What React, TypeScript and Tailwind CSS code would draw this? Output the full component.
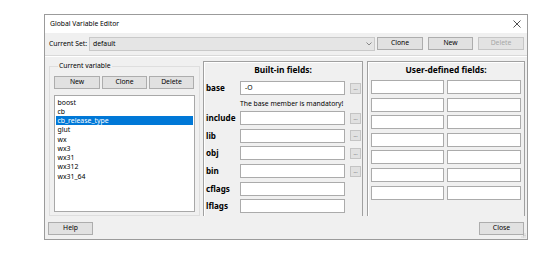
import React from 'react';

const vars = ['boost', 'cb', 'cb_release_type', 'glut', 'wx', 'wx3', 'wx31', 'wx312', 'wx31_64'];
const builtIn = [
  { name: 'include', browse: true },
  { name: 'lib', browse: true },
  { name: 'obj', browse: true },
  { name: 'bin', browse: true },
  { name: 'cflags', browse: false },
  { name: 'lflags', browse: false },
];

function Btn({ label, className = '', disabled = false }: { label: string; className?: string; disabled?: boolean }) {
  return (
    <button
      className={`h-[13px] flex items-center justify-center border text-[6.8px] leading-none ${
        disabled ? 'bg-[#e3e3e3] border-[#c6c6c6] text-[#a6a6a6]' : 'bg-[#e1e1e1] border-[#adadad] text-black'
      } ${className}`}
    >
      {label}
    </button>
  );
}

function Input({ value = '', className = '' }: { value?: string; className?: string }) {
  return (
    <div className={`h-[14px] bg-white border border-[#ababab] flex items-center pl-[4px] text-[6.8px] text-black ${className}`}>
      {value}
    </div>
  );
}

function Browse() {
  return (
    <div className="w-[11px] h-[11px] bg-[#e1e1e1] border border-[#c4c4c4] flex items-center justify-center text-[5px] leading-none text-[#555]">
      ...
    </div>
  );
}

export default function App() {
  return (
    <div className="min-h-screen bg-white pl-[44px] pt-[14px] font-['Noto_Sans',sans-serif] text-black">
      <div className="w-[484px] h-[226px] border border-[#9b9b9b] bg-[#f0f0f0] flex flex-col">
        {/* Title bar */}
        <div className="h-[18px] bg-white flex items-center justify-between pl-[5px] pr-[6px]">
          <span className="text-[6.8px] text-black">Global Variable Editor</span>
          <svg width="8" height="8" viewBox="0 0 8 8">
            <path d="M0.5 0.5 L7.5 7.5 M7.5 0.5 L0.5 7.5" stroke="#222" strokeWidth="0.8" />
          </svg>
        </div>

        {/* Current set row */}
        <div className="h-[23px] flex items-start pt-[4px] pl-[4px] border-b border-[#d9d9d9]">
          <span className="w-[40px] h-[14px] flex items-center text-[6.8px] text-black">Current Set:</span>
          <div className="w-[286px] h-[14px] bg-[#e5e5e5] border border-[#c9c9c9] flex items-center justify-between pl-[3px] pr-[2px] text-[6.8px] text-black">
            <span>default</span>
            <svg width="6" height="4" viewBox="0 0 6 4">
              <path d="M0.5 0.5 L3 3 L5.5 0.5" fill="none" stroke="#606060" strokeWidth="0.7" />
            </svg>
          </div>
          <Btn label="Clone" className="w-[46px] ml-[2px]" />
          <Btn label="New" className="w-[45px] ml-[5px]" />
          <Btn label="Delete" className="w-[46px] ml-[5px]" disabled />
        </div>

        {/* Main area */}
        <div className="h-[160px] flex pl-[4px] border-t border-white">
          <fieldset className="w-[150px] h-[155px] mt-[4px] border border-[#dedede] px-[4px] pt-[5px]">
            <legend className="ml-[4px] px-[1px] text-[6.8px] leading-[10px] text-black">Current variable</legend>
            <div className="grid grid-cols-[46px_45px_45px] gap-[2px]">
              <Btn label="New" />
              <Btn label="Clone" />
              <Btn label="Delete" />
            </div>
            <div className="mt-[6px] w-[141px] h-[117px] bg-white border border-[#a8a8a8] pt-[1.5px] pl-[1px] pr-[1px]">
              {vars.map((v) => (
                <div
                  key={v}
                  className={`h-[9.25px] leading-[9.25px] pl-[1.5px] text-[6.9px] ${
                    v === 'cb_release_type' ? 'bg-[#0078d7] text-white' : 'text-black'
                  }`}
                >
                  {v}
                </div>
              ))}
            </div>
          </fieldset>

          {/* Built-in fields */}
          <div className="w-[160px] h-[155px] ml-[3px] mt-[4px] border-l border-t border-r border-[#a0a0a0] shadow-[inset_1px_1px_0_#ffffff] flex flex-col">
            <div className="h-[17px] flex items-center justify-center font-bold text-[8.4px] text-black">Built-in fields:</div>
            <div className="mt-[2px] pl-[2px] flex flex-col">
              <div className="h-[14px] flex items-center">
                <span className="w-[34px] font-bold text-[8.1px] text-black">base</span>
                <Input value="-O" className="w-[105px]" />
                <div className="ml-[5px]"><Browse /></div>
              </div>
              <div className="h-[16.3px] pl-[34px] pt-[4px] text-[6.8px] leading-[10px] text-black">The base member is mandatory!</div>
              <div className="flex flex-col gap-[3.6px]">
                {builtIn.map((f) => (
                  <div key={f.name} className="h-[14px] flex items-center">
                    <span className="w-[34px] font-bold text-[8.1px] text-black">{f.name}</span>
                    <Input className="w-[105px]" />
                    {f.browse && <div className="ml-[5px]"><Browse /></div>}
                  </div>
                ))}
              </div>
            </div>
          </div>

          {/* User-defined fields */}
          <div className="w-[158px] h-[155px] ml-[4px] mt-[4px] border-l border-t border-r border-[#a0a0a0] shadow-[inset_1px_1px_0_#ffffff] flex flex-col">
            <div className="h-[17px] flex items-center justify-center font-bold text-[8.4px] text-black">User-defined fields:</div>
            <div className="mt-[1px] pl-[3px] grid grid-cols-[73px_74px] gap-x-[3px] gap-y-[3.6px]">
              {Array.from({ length: 14 }).map((_, i) => (
                <Input key={i} />
              ))}
            </div>
          </div>
        </div>

        {/* Bottom buttons */}
        <div className="flex-1 flex items-start justify-between pt-[6px] pl-[3px] pr-[3px] relative">
          <Btn label="Help" className="w-[45px]" />
          <Btn label="Close" className="w-[45px]" />
          <svg className="absolute right-[1px] bottom-[1px]" width="5" height="5" viewBox="0 0 5 5">
            <rect x="3.5" y="0.5" width="1" height="1" fill="#bdbdbd" />
            <rect x="2" y="2" width="1" height="1" fill="#bdbdbd" />
            <rect x="3.5" y="2" width="1" height="1" fill="#bdbdbd" />
            <rect x="0.5" y="3.5" width="1" height="1" fill="#bdbdbd" />
            <rect x="2" y="3.5" width="1" height="1" fill="#bdbdbd" />
            <rect x="3.5" y="3.5" width="1" height="1" fill="#bdbdbd" />
          </svg>
        </div>
      </div>
    </div>
  );
}
